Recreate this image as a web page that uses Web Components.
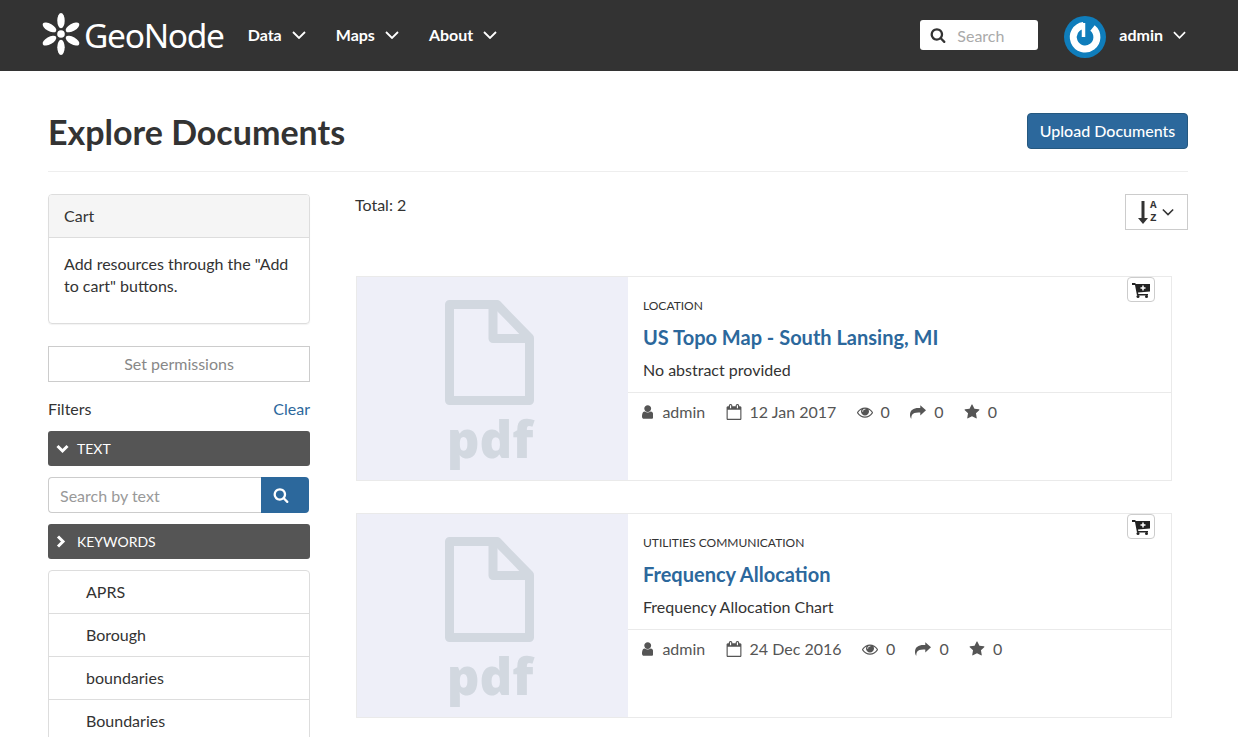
<!DOCTYPE html>
<html>
<head>
<meta charset="utf-8">
<title>Explore Documents</title>
<style>
  html { overflow: hidden; }
  body { margin: 0; background: #fff; color: #333; font: 16px/21px Lato, "Liberation Sans", sans-serif; }
</style>
</head>
<body>
<gn-navbar></gn-navbar>
<gn-page>
  <gn-sidebar slot="side"></gn-sidebar>
  <gn-doc-card kind="Location" title="US Topo Map - South Lansing, MI" abstract="No abstract provided" date="12 Jan 2017"></gn-doc-card>
  <gn-doc-card kind="Utilities Communication" title="Frequency Allocation" abstract="Frequency Allocation Chart" date="24 Dec 2016"></gn-doc-card>
</gn-page>

<script>
const ICONS = {
  search: 'M1216 832q0-185-131.5-316.5t-316.5-131.5-316.5 131.5-131.5 316.5 131.5 316.5 316.5 131.5 316.5-131.5 131.5-316.5zm512 832q0 52-38 90t-90 38q-54 0-90-38l-343-342q-179 124-399 124-143 0-273.5-55.5t-225-150-150-225-55.5-273.5 55.5-273.5 150-225 225-150 273.5-55.5 273.5 55.5 225 150 150 225 55.5 273.5q0 220-124 399l343 343q37 37 37 90z',
  user: 'M1536 1399q0 109-62.5 187t-150.5 78h-854q-88 0-150.5-78t-62.5-187q0-85 8.5-160.5t31.5-152 58.5-131 94-89 134.5-34.5q131 128 313 128t313-128q76 0 134.5 34.5t94 89 58.5 131 31.5 152 8.5 160.5zm-256-887q0 159-112.5 271.5t-271.5 112.5-271.5-112.5-112.5-271.5 112.5-271.5 271.5-112.5 271.5 112.5 112.5 271.5z',
  calendar: 'M192 1664h1408v-1024h-1408v1024zm384-1216v-288q0-14-9-23t-23-9h-64q-14 0-23 9t-9 23v288q0 14 9 23t23 9h64q14 0 23-9t9-23zm768 0v-288q0-14-9-23t-23-9h-64q-14 0-23 9t-9 23v288q0 14 9 23t23 9h64q14 0 23-9t9-23zm384-64v1280q0 52-38 90t-90 38h-1408q-52 0-90-38t-38-90v-1280q0-52 38-90t90-38h128v-96q0-66 47-113t113-47h64q66 0 113 47t47 113v96h384v-96q0-66 47-113t113-47h64q66 0 113 47t47 113v96h128q52 0 90 38t38 90z',
  eye: 'M1664 960q-152-236-381-353 61 104 61 225 0 185-131.5 316.5t-316.5 131.5-316.5-131.5-131.5-316.5q0-121 61-225-229 117-381 353 133 205 333.5 326.5t434.5 121.5 434.5-121.5 333.5-326.5zm-720-384q0-20-14-34t-34-14q-125 0-214.5 89.5t-89.5 214.5q0 20 14 34t34 14 34-14 14-34q0-86 61-147t147-61q20 0 34-14t14-34zm848 384q0 34-20 69-140 230-376.5 368.5t-499.5 138.5-499.5-139-376.5-368q-20-35-20-69t20-69q140-229 376.5-368t499.5-139 499.5 139 376.5 368q20 35 20 69z',
  share: 'M1792 704L1152 128V448H928C400 448 0 680 0 1230C0 1370 60 1520 110 1620C125 1650 165 1640 160 1600C130 1350 200 960 928 960H1152V1280Z',
  star: 'M1728 647q0 22-26 48l-363 354 86 500q1 7 1 20 0 21-10.5 35.5t-30.5 14.5q-19 0-40-12l-449-236-449 236q-22 12-40 12-21 0-31.5-14.5t-10.5-35.5q0-6 2-20l86-500-364-354q-25-27-25-48 0-37 56-46l502-73 225-455q19-41 49-41t49 41l225 455 502 73q56 9 56 46z'
};

function icon(name, size, color) {
  // the user glyph is narrower than the others, crop its box to keep the text close
  const box = name === 'user' ? [256, 1280] : [0, 1792];
  const width = size * box[1] / 1792;
  return `<svg width="${width}" height="${size}" viewBox="${box[0]} 0 ${box[1]} 1792" fill="${color}" style="flex:none;display:block"><path d="${ICONS[name]}"/></svg>`;
}

function chevron(width, color) {
  return `<svg width="${width}" height="8" viewBox="0 0 14 8" fill="none" stroke="${color}" stroke-width="1.8" style="flex:none;display:block"><path d="M1 1l6 6 6-6"/></svg>`;
}

class GnNavbar extends HTMLElement {
  constructor() {
    super();
    this.attachShadow({ mode: 'open' });
  }

  connectedCallback() {
    const petals = [0, 60, 120, 180, 240, 300]
      .map(a => `<ellipse cx="21" cy="7.7" rx="3.7" ry="7.6" transform="rotate(${a} 21 21)"/>`)
      .join('');
    const items = ['Data', 'Maps', 'About']
      .map(t => `<a class="item">${t}${chevron(14, '#fff')}</a>`)
      .join('');
    this.shadowRoot.innerHTML = `
      <style>
        :host { display: block; background: #333; height: 71px; }
        .bar { display: flex; align-items: center; height: 71px; padding: 0 52px 0 40px; }
        .logo { display: flex; align-items: center; color: #fff; font: 33.5px/71px "Noto Sans", sans-serif; letter-spacing: -1.3px; margin-right: 24px; gap: 2px; }
        .logo svg { margin-top: -4px; }
        .item { display: flex; align-items: center; gap: 10px; color: #fff; font: bold 16px Lato, sans-serif; margin: -2px 30px 0 0; }
        .search { display: flex; align-items: center; gap: 11px; box-sizing: border-box; width: 118px; height: 30px; padding-left: 10px; margin: -1px 0 0 auto; background: #fff; border-radius: 3px; color: #aaa; font-size: 16px; }
        .avatar { margin-left: 26px; margin-right: 13px; margin-top: 3px; }
        .user { display: flex; align-items: center; gap: 10px; margin-top: -2px; color: #fff; font: bold 16px Lato, sans-serif; }
      </style>
      <div class="bar">
        <div class="logo">
          <svg width="42" height="42" viewBox="0 0 42 42" fill="#fff">${petals}<circle cx="21" cy="21" r="3.8"/></svg>
          <span>GeoNode</span>
        </div>
        ${items}
        <div class="search">${icon('search', 16, '#333')}<span>Search</span></div>
        <svg class="avatar" width="42" height="42" viewBox="0 0 42 42">
          <circle cx="21" cy="21" r="21" fill="#0f7dbb"/>
          <path d="M19.500 9.500A11.800 11.800 0 1 0 28.500 12" fill="none" stroke="#fff" stroke-width="7"/>
          <path d="M19.500 7v14" stroke="#fff" stroke-width="3.500"/>
        </svg>
        <div class="user">admin${chevron(13, '#fff')}</div>
      </div>`;
  }
}

class GnPage extends HTMLElement {
  constructor() {
    super();
    this.attachShadow({ mode: 'open' });
  }

  connectedCallback() {
    this.shadowRoot.innerHTML = `
      <style>
        :host { display: block; padding: 0 50px 0 48px; }
        header { display: flex; justify-content: space-between; align-items: flex-start; height: 100px; border-bottom: 1px solid #eee; }
        h1 { margin: 41px 0 0; font: bold 34px/40px Lato, sans-serif; color: #333; }
        .upload { margin-top: 42px; box-sizing: border-box; width: 161px; height: 36px; background: #2c689c; border: 1px solid #25587f; border-radius: 4px; color: #fff; font: 500 16px/33px Lato, sans-serif; text-align: center; }
        .cols { display: grid; grid-template-columns: 262px 1fr; column-gap: 45px; margin-top: 22px; }
        .top { display: flex; justify-content: space-between; align-items: flex-start; height: 82px; }
        .sort { display: flex; align-items: center; gap: 2px; box-sizing: border-box; width: 63px; height: 36px; padding-left: 12px; border: 1px solid #ccc; }
        .az { display: flex; flex-direction: column; font: bold 11px/13px "Liberation Mono", monospace; color: #333; margin-right: 3px; }
        .list { display: flex; flex-direction: column; gap: 32px; margin-left: 1px; margin-right: 16px; }
      </style>
      <header>
        <h1>Explore Documents</h1>
        <div class="upload">Upload Documents</div>
      </header>
      <div class="cols">
        <slot name="side"></slot>
        <div>
          <div class="top">
            <div>Total: 2</div>
            <div class="sort">
              <svg width="10" height="23" viewBox="0 0 10 23" fill="#333"><path d="M3.500 0h3v17h3.500l-5 6-5-6h3.500z"/></svg>
              <div class="az"><span>A</span><span>Z</span></div>
              <span>${chevron(12, '#333')}</span>
            </div>
          </div>
          <div class="list"><slot></slot></div>
        </div>
      </div>`;
  }
}

class GnSidebar extends HTMLElement {
  constructor() {
    super();
    this.attachShadow({ mode: 'open' });
  }

  connectedCallback() {
    const rows = ['APRS', 'Borough', 'boundaries', 'Boundaries']
      .map(t => `<div class="row">${t}</div>`)
      .join('');
    this.shadowRoot.innerHTML = `
      <style>
        :host { display: block; }
        .cart { box-sizing: border-box; height: 130px; border: 1px solid #ddd; border-radius: 4px; box-shadow: 0 1px 1px rgba(0,0,0,.05); }
        .cart .head { height: 43px; box-sizing: border-box; padding: 10px 15px; background: #f5f5f5; border-bottom: 1px solid #ddd; border-radius: 3px 3px 0 0; }
        .cart .body { padding: 15px 15px; line-height: 22px; }
        .perm { box-sizing: border-box; height: 36px; margin-top: 22px; border: 1px solid #ccc; color: #888; line-height: 33px; text-align: center; }
        .filters { display: flex; justify-content: space-between; margin-top: 16px; height: 33px; }
        .filters a { color: #2c689c; }
        .bar { display: flex; align-items: center; box-sizing: border-box; height: 35px; padding-left: 8px; background: #555; border-radius: 3px; color: #fff; font-size: 14px; }
        .bar svg { margin-right: 8px; }
        .bar svg.right { margin-right: 11px; }
        .search { display: flex; width: 261px; height: 36px; margin: 11px 0; }
        .input { flex: 1; box-sizing: border-box; padding-left: 11px; border: 1px solid #ccc; border-right: 0; border-radius: 4px 0 0 4px; color: #999; line-height: 36px; }
        .go { display: flex; align-items: center; justify-content: center; width: 48px; padding-right: 8px; box-sizing: border-box; background: #2c689c; border-radius: 0 4px 4px 0; }
        .rows { margin-top: 11px; border: 1px solid #ddd; border-radius: 4px; }
        .row { box-sizing: border-box; height: 43px; padding-left: 37px; line-height: 42px; border-bottom: 1px solid #ddd; }
      </style>
      <div class="cart">
        <div class="head">Cart</div>
        <div class="body">Add resources through the "Add to cart" buttons.</div>
      </div>
      <div class="perm">Set permissions</div>
      <div class="filters"><span>Filters</span><a>Clear</a></div>
      <div class="bar">
        <svg width="13" height="10" viewBox="0 0 13 10" fill="none" stroke="#fff" stroke-width="3"><path d="M1.500 2l5 5 5-5"/></svg>
        <span>TEXT</span>
      </div>
      <div class="search">
        <div class="input">Search by text</div>
        <div class="go">${icon('search', 16, '#fff')}</div>
      </div>
      <div class="bar">
        <svg class="right" width="10" height="13" viewBox="0 0 10 13" fill="none" stroke="#fff" stroke-width="3"><path d="M2 1.500l5 5-5 5"/></svg>
        <span>KEYWORDS</span>
      </div>
      <div class="rows">${rows}</div>`;
  }
}

class GnDocCard extends HTMLElement {
  constructor() {
    super();
    this.attachShadow({ mode: 'open' });
  }

  connectedCallback() {
    const meta = [
      ['user', 'admin'],
      ['calendar', this.getAttribute('date')],
      ['eye', '0'],
      ['share', '0'],
      ['star', '0']
    ].map(([name, text]) => `<span class="m ${name}">${icon(name, 16, '#555')}<span>${text}</span></span>`).join('');

    this.shadowRoot.innerHTML = `
      <style>
        :host { display: block; }
        .card { display: flex; box-sizing: border-box; height: 205px; border: 1px solid #eaeaea; }
        .thumb { display: flex; flex-direction: column; align-items: center; width: 271px; flex: none; padding: 23px 5px 0 0; box-sizing: border-box; background: #eeeff8; color: #d2d8e0; }
        .thumb span { font: 800 51px/50px "Open Sans", sans-serif; margin-top: 8px; }
        .info { flex: 1; position: relative; }
        .text { padding: 21px 15px 0; height: 116px; box-sizing: border-box; border-bottom: 1px solid #eaeaea; }
        .kind { font-size: 12px; line-height: 16px; text-transform: uppercase; }
        h4 { margin: 9px 0 0; font: bold 20px/28px Lato, sans-serif; color: #2c689c; }
        p { margin: 8px 0 0; line-height: 21px; }
        .meta { display: flex; gap: 20.3px; padding: 8px 0 0 14px; color: #555; }
        .m { display: flex; align-items: center; gap: 8px; }
        .m.user { gap: 9px; }
        .cart { position: absolute; top: 0; right: 16px; display: flex; align-items: center; justify-content: center; box-sizing: border-box; width: 28px; height: 25px; background: #fff; border: 1px solid #ccc; border-radius: 4px; }
      </style>
      <div class="card">
        <div class="thumb">
          <svg width="90" height="105" viewBox="0 0 90 105" fill="none" stroke="#d2d8e0" stroke-width="9" stroke-linejoin="round">
            <path d="M4.500 4.500H52L84.500 38v62.500h-80z"/><path d="M48 4.500v34h36.500"/>
          </svg>
          <span>pdf</span>
        </div>
        <div class="info">
          <div class="text">
            <div class="kind">${this.getAttribute('kind')}</div>
            <h4>${this.getAttribute('title')}</h4>
            <p>${this.getAttribute('abstract')}</p>
          </div>
          <div class="meta">${meta}</div>
          <div class="cart">
            <svg width="18" height="16" viewBox="0 0 18 16"><path d="M0 1h3l1 1h14v7.500l-12 1 .3 1.500H16v1.500H5L3 3H0z" fill="#222"/><circle cx="6" cy="14.500" r="1.500" fill="#222"/><circle cx="14.500" cy="14.500" r="1.500" fill="#222"/><path d="M11 3.500v5M8.500 6h5" stroke="#fff" stroke-width="1.500"/></svg>
          </div>
        </div>
      </div>`;
  }
}

customElements.define('gn-navbar', GnNavbar);
customElements.define('gn-page', GnPage);
customElements.define('gn-sidebar', GnSidebar);
customElements.define('gn-doc-card', GnDocCard);
</script>
</body>
</html>
